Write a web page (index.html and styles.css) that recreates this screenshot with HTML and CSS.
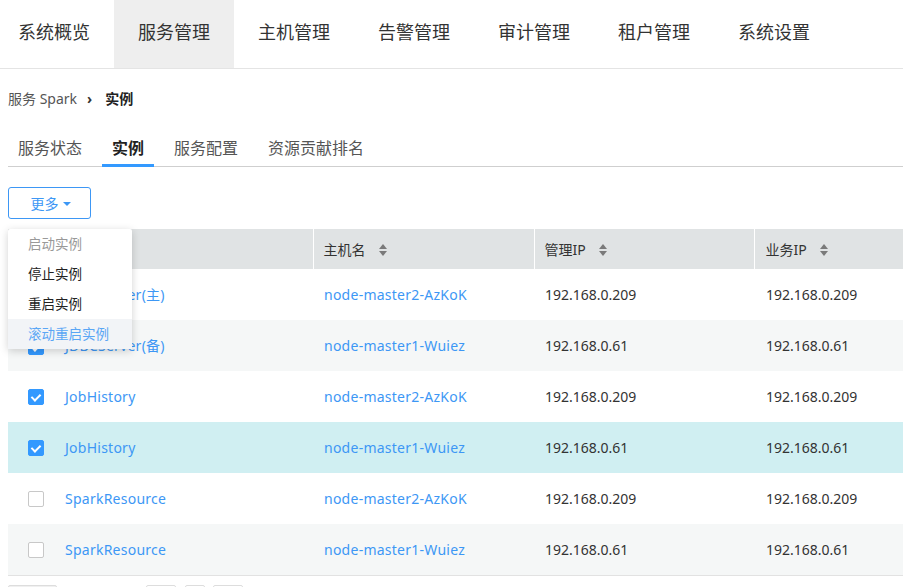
FILE: index.html
```html
<!DOCTYPE html>
<html lang="zh-CN">
<head>
<meta charset="utf-8">
<title>实例</title>
<link rel="stylesheet" href="styles.css">
</head>
<body>
<nav class="topnav">
  <a class="nav-item">系统概览</a>
  <a class="nav-item active">服务管理</a>
  <a class="nav-item">主机管理</a>
  <a class="nav-item">告警管理</a>
  <a class="nav-item">审计管理</a>
  <a class="nav-item">租户管理</a>
  <a class="nav-item">系统设置</a>
</nav>
<main class="main">
  <div class="breadcrumb">
    <span class="crumb">服务 Spark</span>
    <span class="crumb-sep">›</span>
    <span class="crumb-current">实例</span>
  </div>
  <div class="subtabs">
    <a class="subtab">服务状态</a>
    <a class="subtab active">实例</a>
    <a class="subtab">服务配置</a>
    <a class="subtab">资源贡献排名</a>
  </div>
  <div class="toolbar">
    <button class="btn-more">更多 <span class="caret"></span></button>
    <ul class="dropdown">
      <li class="dd-item disabled">启动实例</li>
      <li class="dd-item">停止实例</li>
      <li class="dd-item">重启实例</li>
      <li class="dd-item hover">滚动重启实例</li>
    </ul>
  </div>
  <table class="grid">
    <colgroup>
      <col class="c1"><col class="c2"><col class="c3"><col class="c4">
    </colgroup>
    <thead>
      <tr>
        <th></th>
        <th>主机名 <span class="sort"></span></th>
        <th>管理IP <span class="sort"></span></th>
        <th>业务IP <span class="sort"></span></th>
      </tr>
    </thead>
    <tbody>
      <tr>
        <td><span class="cb checked"></span><a class="link">JDBCServer(主)</a></td>
        <td><a class="link">node-master2-AzKoK</a></td>
        <td>192.168.0.209</td>
        <td>192.168.0.209</td>
      </tr>
      <tr class="stripe">
        <td><span class="cb checked"></span><a class="link">JDBCServer(备)</a></td>
        <td><a class="link">node-master1-Wuiez</a></td>
        <td>192.168.0.61</td>
        <td>192.168.0.61</td>
      </tr>
      <tr>
        <td><span class="cb checked"></span><a class="link">JobHistory</a></td>
        <td><a class="link">node-master2-AzKoK</a></td>
        <td>192.168.0.209</td>
        <td>192.168.0.209</td>
      </tr>
      <tr class="selected">
        <td><span class="cb checked"></span><a class="link">JobHistory</a></td>
        <td><a class="link">node-master1-Wuiez</a></td>
        <td>192.168.0.61</td>
        <td>192.168.0.61</td>
      </tr>
      <tr>
        <td><span class="cb"></span><a class="link">SparkResource</a></td>
        <td><a class="link">node-master2-AzKoK</a></td>
        <td>192.168.0.209</td>
        <td>192.168.0.209</td>
      </tr>
      <tr class="stripe">
        <td><span class="cb"></span><a class="link">SparkResource</a></td>
        <td><a class="link">node-master1-Wuiez</a></td>
        <td>192.168.0.61</td>
        <td>192.168.0.61</td>
      </tr>
    </tbody>
  </table>
  <div class="pager">
    <span class="pg pg-size"></span>
    <span class="pg pg-a"></span>
    <span class="pg pg-b"></span>
    <span class="pg pg-c"></span>
  </div>
</main>
</body>
</html>
```
FILE: styles.css
```css
* { box-sizing: border-box; }
html, body { margin: 0; padding: 0; background: #fff; }
body {
  font-family: "Noto Sans", "Noto Sans CJK SC", sans-serif;
  color: #333;
  font-size: 14px;
  overflow: hidden;
  width: 903px;
  height: 587px;
}
a { text-decoration: none; }

.topnav {
  display: flex;
  height: 69px;
  border-bottom: 1px solid #e4e4e4;
}
.nav-item {
  display: block;
  height: 68px;
  line-height: 62px;
  padding: 0 24px;
  font-size: 18px;
  color: #333;
  font-family: "Noto Sans CJK SC", sans-serif;
}
.nav-item:first-child { padding-left: 18px; }
.nav-item.active { background: #eeeeee; }

.main { padding-left: 8px; }

.breadcrumb {
  margin-top: 20px;
  height: 20px;
  line-height: 20px;
  font-size: 14px;
  display: flex;
  align-items: center;
}
.crumb { color: #555; }
.crumb-sep { color: #333; margin: 0 13px 0 10px; font-weight: bold; }
.crumb-current { color: #222; font-weight: bold; }

.subtabs {
  margin-top: 21px;
  display: flex;
  gap: 10px;
  border-bottom: 1px solid #cfcfcf;
}
.subtab {
  position: relative;
  display: block;
  height: 36px;
  line-height: 36px;
  padding: 0 10px;
  font-size: 16px;
  color: #555;
}
.subtab.active { color: #222; font-weight: bold; }
.subtab.active::after {
  content: "";
  position: absolute;
  left: 0; right: 0; bottom: -1px;
  height: 3px;
  background: #3399ff;
}

.toolbar { position: relative; margin-top: 20px; height: 32px; }
.btn-more {
  width: 83px;
  height: 32px;
  border: 1px solid #3d97f5;
  border-radius: 3px;
  background: #fff;
  color: #3d97f5;
  font-family: "Noto Sans CJK SC", sans-serif;
  font-size: 14px;
  padding: 0 0 0 2px;
  display: flex;
  align-items: center;
  justify-content: center;
  gap: 4px;
}
.caret {
  display: inline-block;
  width: 0; height: 0;
  border-left: 4px solid transparent;
  border-right: 4px solid transparent;
  border-top: 4px solid #3d97f5;
  margin-top: 2px;
}
.dropdown {
  position: absolute;
  top: 42px;
  left: 0;
  width: 124px;
  margin: 0;
  padding: 0;
  list-style: none;
  background: #fff;
  border-radius: 2px;
  box-shadow: 0 2px 8px rgba(0, 0, 0, 0.18);
  z-index: 10;
}
.dd-item {
  height: 30px;
  line-height: 29px;
  padding-left: 20px;
  font-size: 13.5px;
  color: #222;
  font-family: "Noto Sans CJK SC", sans-serif;
}
.dd-item.disabled { color: #999; }
.dd-item.hover { background: #f2f4f7; color: #5aa6f5; }

.grid {
  margin-top: 10px;
  width: 895px;
  border-collapse: collapse;
  table-layout: fixed;
  border-bottom: 1px solid #e2e2e2;
}
.c1 { width: 305px; }
.c2 { width: 221px; }
.c3 { width: 220px; }
.c4 { width: 149px; }
.grid th {
  height: 40px;
  background: #e0e3e4;
  text-align: left;
  font-weight: normal;
  font-size: 14px;
  color: #333;
  padding: 0 0 0 10px;
  border-left: 1px solid #fff;
  white-space: nowrap;
}
.grid th:first-child { border-left: none; }
.grid th:nth-child(4) { padding-left: 11px; }
.grid td {
  height: 51px;
  padding: 0 0 0 11px;
  font-size: 14px;
  color: #333;
  white-space: nowrap;
}
.grid td:nth-child(4) { padding-left: 12px; }
.grid td:first-child { padding-left: 20px; }
.grid tr.stripe td { background: #f5f7f7; }
.grid tr.selected td { background: #d0eff2; }
.link { color: #3d97f5; letter-spacing: 0.25px; }

.sort {
  display: inline-block;
  position: relative;
  width: 8px;
  height: 12px;
  margin-left: 10px;
  vertical-align: -1px;
}
.sort::before, .sort::after {
  content: "";
  position: absolute;
  left: 0;
  width: 0; height: 0;
  border-left: 4px solid transparent;
  border-right: 4px solid transparent;
}
.sort::before { top: 0; border-bottom: 5px solid #7a7a7a; }
.sort::after { bottom: 0; border-top: 5px solid #7a7a7a; }

.cb {
  display: inline-block;
  width: 16px;
  height: 16px;
  border: 1px solid #c8c8c8;
  border-radius: 2px;
  background: #fff;
  vertical-align: middle;
  margin-right: 21px;
  position: relative;
  top: -1px;
}
.cb.checked {
  background: #3399ff;
  border-color: #3399ff;
}
.cb.checked::after {
  content: "";
  position: absolute;
  left: 4px;
  top: 2px;
  width: 4px;
  height: 7px;
  border-right: 2.5px solid #fff;
  border-bottom: 2.5px solid #fff;
  transform: rotate(45deg);
}

.pager {
  display: flex;
  margin-top: 9px;
  height: 10px;
}
.pg { display: block; height: 10px; border: 1px solid #ddd; border-radius: 2px; }
.pg-size { width: 49px; background: #f0f0f0; }
.pg-a { width: 30px; margin-left: 89px; }
.pg-b { width: 20px; margin-left: 9px; }
.pg-c { width: 30px; margin-left: 8px; }
```
